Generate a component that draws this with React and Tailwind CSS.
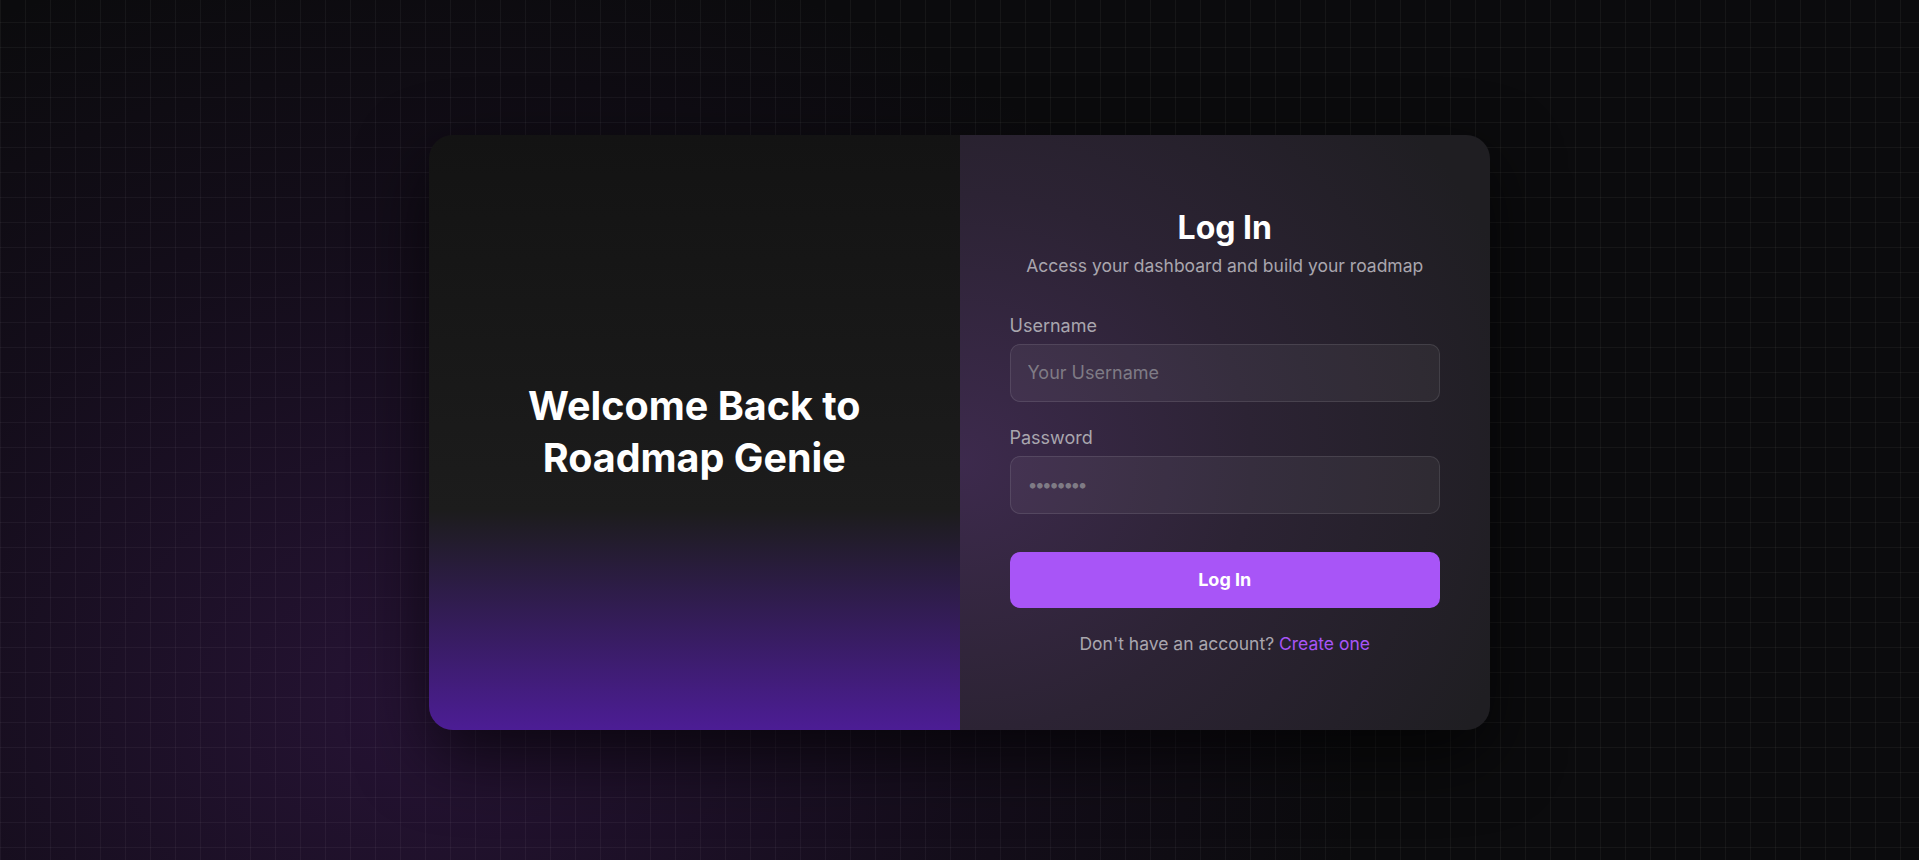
export default function App() {
  return (
    <div className="relative flex min-h-screen items-center justify-center overflow-hidden bg-[#0b0b0d] pt-1 font-['Inter',sans-serif]">
      <div className="pointer-events-none absolute inset-0 bg-[radial-gradient(ellipse_60%_110%_at_22%_82%,rgba(115,42,165,0.26),rgba(85,30,125,0.12)_48%,transparent_82%)]" />
      <div className="pointer-events-none absolute inset-0 bg-[linear-gradient(to_right,rgba(255,255,255,0.045)_1px,transparent_1px),linear-gradient(to_bottom,rgba(255,255,255,0.045)_1px,transparent_1px)] bg-[size:25px_25px] bg-[position:0_22px]" />

      <div className="relative flex h-[595px] w-[1061px] overflow-hidden rounded-3xl shadow-[0_25px_70px_rgba(0,0,0,0.65)]">
        <div className="flex w-1/2 items-center justify-center bg-[linear-gradient(to_bottom,#131313_0%,#1c1c1c_63%,#4c1d95_100%)]">
          <h2 className="text-center text-[39.5px] font-bold leading-[52px] text-white">
            Welcome Back to
            <br />
            Roadmap Genie
          </h2>
        </div>

        <div className="flex w-1/2 flex-col justify-center bg-[radial-gradient(ellipse_110%_90%_at_0%_55%,#3d2a4d_0%,#2c2334_50%,#1f1e22_100%)] px-[50px] pt-[2px]">
          <h1 className="text-center text-[32px] font-bold leading-10 text-white">Log In</h1>
          <p className="mt-1 text-center text-[17.5px] leading-7 text-[#a9a6ae]">
            Access your dashboard and build your roadmap
          </p>

          <form className="mt-8" onSubmit={(e) => e.preventDefault()}>
            <label className="mb-1 block text-lg text-[#a9a6ae]">Username</label>
            <input
              type="text"
              placeholder="Your Username"
              className="block w-full rounded-[10px] border border-white/10 bg-white/5 px-[17px] py-3.5 text-lg leading-7 text-white outline-none placeholder:text-[#7f7b85]"
            />

            <label className="mt-[22px] mb-1 block text-lg text-[#a9a6ae]">Password</label>
            <input
              type="password"
              placeholder="••••••••"
              className="block w-full rounded-[10px] border border-white/10 bg-white/5 px-[17px] py-3.5 text-lg leading-7 text-white outline-none placeholder:tracking-[-3px] placeholder:text-[#7f7b85]"
            />

            <button
              type="submit"
              className="mt-[38px] block w-full rounded-[10px] bg-[#a855f7] py-3.5 text-lg font-bold leading-7 text-white"
            >
              Log In
            </button>
          </form>

          <p className="mt-[22px] text-center text-[17.5px] leading-7 text-[#a9a6ae]">
            Don't have an account?{" "}
            <a href="#" className="text-[#a855f7]">
              Create one
            </a>
          </p>
        </div>
      </div>
    </div>
  );
}
